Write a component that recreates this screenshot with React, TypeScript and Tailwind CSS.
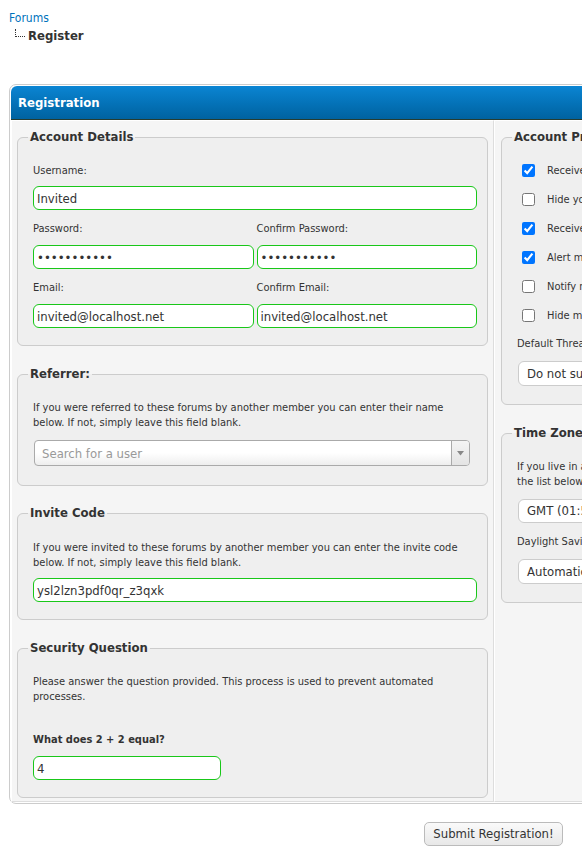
import React from 'react';

// MyBB style registration form (page is wider than the viewport, right side clipped)

const Field = ({ value, type = 'text', className = '' }: { value: string; type?: string; className?: string }) => (
  <input
    type={type}
    readOnly
    defaultValue={value}
    className={`block h-[24px] rounded-[6px] border border-[#19c719] bg-white px-[3px] text-[13px] text-[#333] outline-none ${className}`}
  />
);

const Legend = ({ children }: { children: React.ReactNode }) => (
  <legend className="px-[2px] py-px text-[13px] font-bold leading-[16px] text-[#333]">{children}</legend>
);

const Prefs = [
  { label: 'Receive emails from the Administrators.', checked: true },
  { label: 'Hide your email from other members.', checked: false },
  { label: 'Receive private messages from other users.', checked: true },
  { label: 'Alert me with a notice when I receive a Private Message.', checked: true },
  { label: 'Notify me by email when I receive a new Private Message.', checked: false },
  { label: "Hide me from the Who's Online list.", checked: false },
];

const FakeSelect = ({ value, className = '' }: { value: string; className?: string }) => (
  <div className={`ml-[6px] flex w-[440px] items-center rounded-[6px] border border-[#ccc] bg-white pl-[8px] text-[13px] text-[#333] ${className}`}>
    {value}
  </div>
);

export default function App() {
  return (
    <div className="h-[862px] w-[582px] overflow-hidden bg-white font-['DejaVu_Sans_Condensed','Liberation_Sans',sans-serif] text-[#333]">
      <div className="w-[987px] px-[9px] pt-[11px]">
        {/* breadcrumb */}
        <nav>
          <a className="block text-[12px] leading-[15px] text-[#0072bc]">Forums</a>
          <div className="mt-px flex items-center">
            <span className="ml-[6px] mb-[6px] h-[8px] w-[10px] border-b border-l border-dotted border-[#333]" />
            <span className="ml-[3px] text-[13px] font-bold leading-[17px] text-[#333]">Register</span>
          </div>
        </nav>

        <div className="mt-[40px] rounded-[7px] border border-[#ccc] bg-white p-px">
          <div className="rounded-tl-[6px] rounded-tr-[6px] border-b border-[#263c30] bg-gradient-to-b from-[#0b85d3] to-[#0062a0] py-[8px] pl-[7px] text-[13px] font-bold leading-[17px] text-white">
            Registration
          </div>

          <div className="grid grid-cols-[483px_1fr]">
            {/* left cell */}
            <div className="border border-white border-r-[#ddd] border-b-[#ddd] bg-[#f5f5f5] px-[5px] pt-[7px] pb-[3px]">
              <fieldset className="rounded-[6px] border border-[#ccc] bg-[#efefef] px-[10px] pb-[10px] pt-[10px]">
                <Legend>Account Details</Legend>
                <div className="pl-[5px] pb-[7px] text-[11px] leading-[16px]">
                  <div className="pt-[7px] pb-[7px]">Username:</div>
                  <Field value="Invited" className="w-full" />
                  <div className="grid grid-cols-2 gap-x-[3px]">
                    <div>
                      <div className="pt-[11px] pb-[8px]">Password:</div>
                      <Field type="password" value="12345678901" className="w-full" />
                    </div>
                    <div>
                      <div className="pt-[11px] pb-[8px]">Confirm Password:</div>
                      <Field type="password" value="12345678901" className="w-full" />
                    </div>
                    <div>
                      <div className="pt-[11px] pb-[8px]">Email:</div>
                      <Field value="invited@localhost.net" className="w-full" />
                    </div>
                    <div>
                      <div className="pt-[11px] pb-[8px]">Confirm Email:</div>
                      <Field value="invited@localhost.net" className="w-full" />
                    </div>
                  </div>
                </div>
              </fieldset>

              <fieldset className="mt-[19px] rounded-[6px] border border-[#ccc] bg-[#efefef] px-[10px] pb-[10px] pt-[9px]">
                <Legend>Referrer:</Legend>
                <div className="pl-[5px] pb-[9px] text-[11px] leading-[15px]">
                  <div className="whitespace-nowrap pt-[8px]">
                    If you were referred to these forums by another member you can enter their name
                    <br />
                    below. If not, simply leave this field blank.
                  </div>
                  <div className="ml-px mt-[10px] flex h-[26px] w-[436px] items-stretch overflow-hidden rounded-[4px] border border-[#aaa] bg-gradient-to-b from-white from-50% to-[#eee]">
                    <span className="flex flex-1 items-center pl-[7px] text-[13px] text-[#999]">Search for a user</span>
                    <span className="flex w-[18px] items-center justify-center border-l border-[#aaa] bg-gradient-to-b from-[#f4f4f4] to-[#e4e4e4]">
                      <svg width="7" height="5" viewBox="0 0 7 5">
                        <path d="M0 0h7L3.5 4.5z" fill="#888" />
                      </svg>
                    </span>
                  </div>
                </div>
              </fieldset>

              <fieldset className="mt-[18px] rounded-[6px] border border-[#ccc] bg-[#efefef] px-[10px] pb-[10px] pt-[9px]">
                <Legend>Invite Code</Legend>
                <div className="pl-[5px] pb-[7px] text-[11px] leading-[15px]">
                  <div className="whitespace-nowrap pt-[9px]">
                    If you were invited to these forums by another member you can enter the invite code
                    <br />
                    below. If not, simply leave this field blank.
                  </div>
                  <Field value="ysl2lzn3pdf0qr_z3qxk" className="mt-[8px] w-full" />
                </div>
              </fieldset>

              <fieldset className="mt-[19px] rounded-[6px] border border-[#ccc] bg-[#efefef] px-[10px] pb-[10px] pt-[9px]">
                <Legend>Security Question</Legend>
                <div className="pl-[5px] pb-[7px] text-[11px] leading-[15px]">
                  <div className="whitespace-nowrap pt-[8px]">
                    Please answer the question provided. This process is used to prevent automated
                    <br />
                    processes.
                  </div>
                  <div className="mt-[28px] font-bold">What does 2 + 2 equal?</div>
                  <Field value="4" className="mt-[9px] w-[188px]" />
                </div>
              </fieldset>
            </div>

            {/* right cell */}
            <div className="border border-white border-r-[#ddd] border-b-[#ddd] bg-[#f5f5f5] pl-[6px] pr-[5px] pt-[7px] pb-[3px]">
              <fieldset className="rounded-[6px] border border-[#ccc] bg-[#efefef] px-[10px] pb-[10px] pt-[10px]">
                <Legend>Account Preferences</Legend>
                <div className="pb-[8px] text-[11px] leading-[16px]">
                  {Prefs.map((p) => (
                    <label key={p.label} className="flex h-[29px] items-center pl-[10px]">
                      <input type="checkbox" defaultChecked={p.checked} className="m-0 h-[13px] w-[13px]" />
                      <span className="ml-[12px] whitespace-nowrap">{p.label}</span>
                    </label>
                  ))}
                  <div className="pl-[5px] pt-[6px]">Default Thread Subscription Mode:</div>
                  <FakeSelect value="Do not subscribe" className="mt-[9px] h-[25px]" />
                </div>
              </fieldset>

              <fieldset className="mt-[19px] rounded-[6px] border border-[#ccc] bg-[#efefef] px-[10px] pb-[10px] pt-[10px]">
                <Legend>Time Zone and Daylight Saving Time</Legend>
                <div className="pb-[8px] text-[11px]">
                  <div className="whitespace-nowrap pl-[5px] pt-[7px] leading-[15px]">
                    If you live in a time zone which differs to what this board is set at, you can select it from
                    <br />
                    the list below.
                  </div>
                  <FakeSelect value="GMT (01:52 PM)" className="mt-[10px] h-[24px]" />
                  <div className="pl-[5px] pt-[11px] leading-[16px]">Daylight Saving Time correction:</div>
                  <FakeSelect value="Automatically detect DST settings" className="mt-[9px] h-[25px]" />
                </div>
              </fieldset>
            </div>
          </div>
        </div>

        <div className="mt-[18px] flex justify-center">
          <button className="h-[24px] rounded-[5px] border border-[#bbb] bg-gradient-to-b from-[#fafafa] to-[#e8e8e8] px-[8px] text-[13px] text-[#333]">
            Submit Registration!
          </button>
        </div>
      </div>
    </div>
  );
}
